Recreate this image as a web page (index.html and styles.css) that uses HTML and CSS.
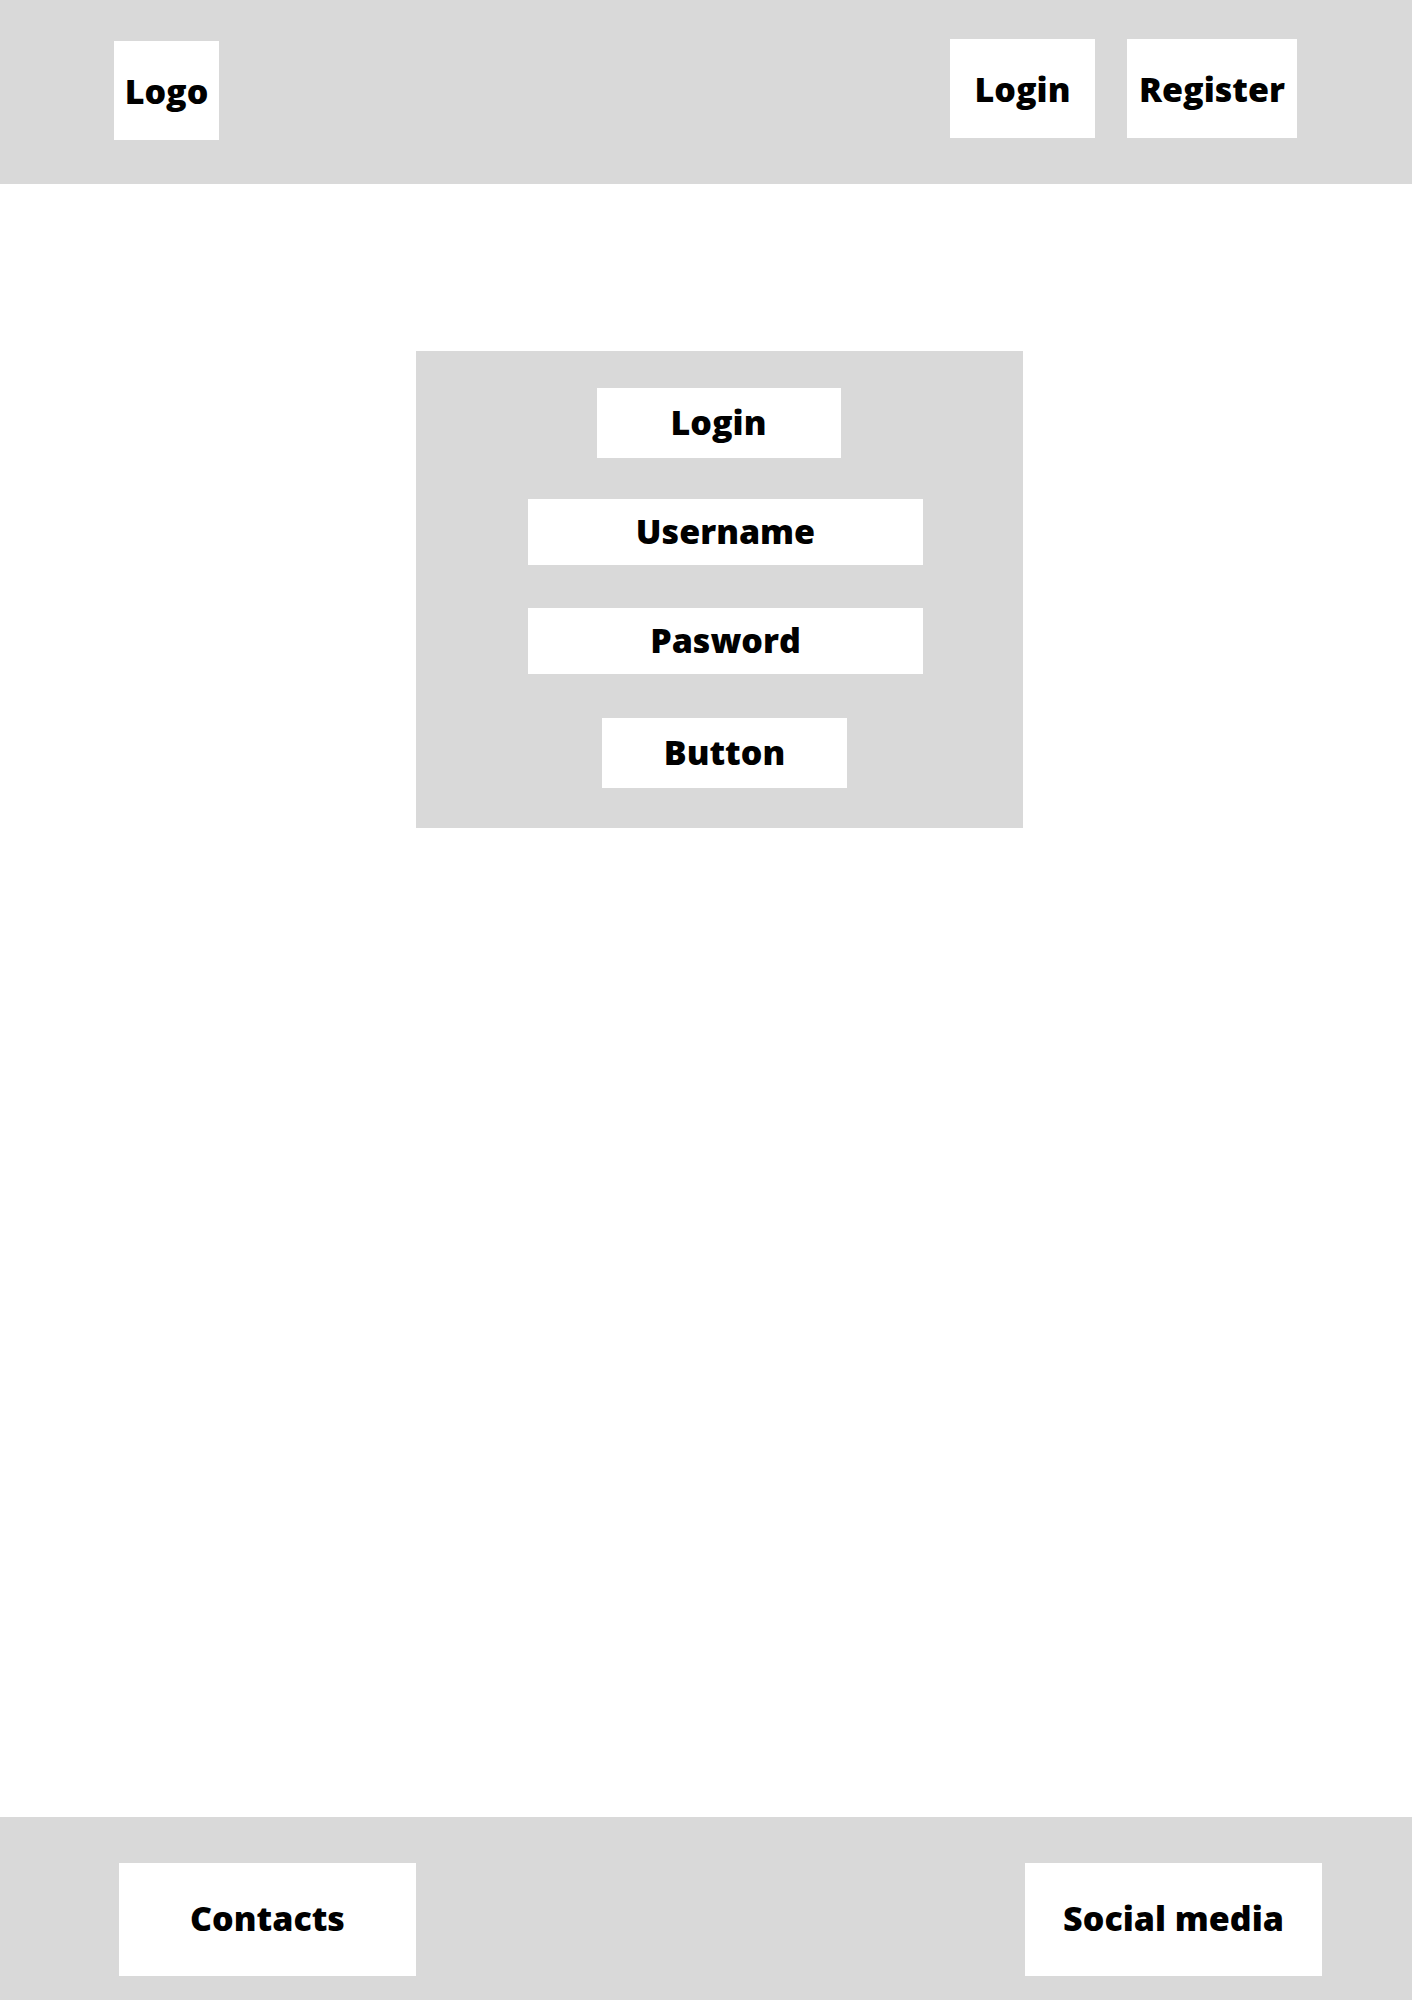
FILE: index.html
```html
<!DOCTYPE html>
<html lang="en">
  <head>
    <meta charset="UTF-8" />
    <meta name="viewport" content="width=device-width, initial-scale=1.0" />
    <title>Login</title>
    <link rel="stylesheet" href="styles.css">
  </head>
  <body>
    <div class="page">
      <header class="top_bar">
        <div class="box logo">Logo</div>
        <nav class="nav">
          <a class="box nav_login" href="#">Login</a>
          <a class="box nav_register" href="#">Register</a>
        </nav>
      </header>

      <main class="content">
        <form class="login_panel" onsubmit="return false">
          <div class="box panel_title">Login</div>
          <div class="box field">Username</div>
          <div class="box field field_password">Pasword</div>
          <button class="box submit" type="submit">Button</button>
        </form>
      </main>

      <footer class="bottom_bar">
        <div class="box footer_item">Contacts</div>
        <div class="box footer_item">Social media</div>
      </footer>
    </div>
  </body>
</html>
```

FILE: styles.css
```css
body {
  margin: 0;
  font-family: "Open Sans", "Noto Sans", sans-serif;
  font-weight: 800;
  color: #000000;
  background-color: #ffffff;
}

.page {
  width: 1412px;
  min-height: 100vh;
  display: flex;
  flex-direction: column;
}

.box {
  background-color: #ffffff;
  color: #000000;
  display: flex;
  align-items: center;
  justify-content: center;
  text-decoration: none;
  box-sizing: border-box;
  font-size: 34px;
  white-space: nowrap;
}

/* header */
.top_bar {
  height: 184px;
  background-color: #d9d9d9;
  display: flex;
  justify-content: space-between;
  align-items: flex-start;
  padding: 39px 115px 0 114px;
  box-sizing: border-box;
}

.logo {
  width: 105px;
  height: 99px;
  margin-top: 2px;
}

.nav {
  display: flex;
  gap: 32px;
}

.nav_login {
  width: 145px;
  height: 99px;
}

.nav_register {
  width: 170px;
  height: 99px;
}

/* login form */
.content {
  flex: 1;
  padding: 167px 0 0 416px;
}

.login_panel {
  width: 607px;
  height: 477px;
  background-color: #d9d9d9;
  display: flex;
  flex-direction: column;
  align-items: center;
  padding: 37px 0 0 12px;
  box-sizing: border-box;
  margin: 0;
}

.login_panel .box {
  font-size: 34px;
}

.panel_title {
  width: 244px;
  height: 70px;
  margin-right: 14px;
  margin-bottom: 41px;
  padding-bottom: 3px;
}

.field {
  width: 395px;
  height: 66px;
  margin-bottom: 43px;
  padding-bottom: 3px;
}

.field_password {
  margin-bottom: 44px;
}

.submit {
  width: 245px;
  height: 70px;
  border: none;
  padding: 0 0 3px 0;
  font-family: "Open Sans", "Noto Sans", sans-serif;
  font-weight: 800;
  cursor: pointer;
  margin-right: 2px;
}

/* footer */
.bottom_bar {
  height: 183px;
  background-color: #d9d9d9;
  display: flex;
  justify-content: space-between;
  align-items: flex-start;
  padding: 46px 90px 0 119px;
  box-sizing: border-box;
}

.footer_item {
  width: 297px;
  height: 113px;
  font-size: 34px;
  padding-bottom: 3px;
}
```
